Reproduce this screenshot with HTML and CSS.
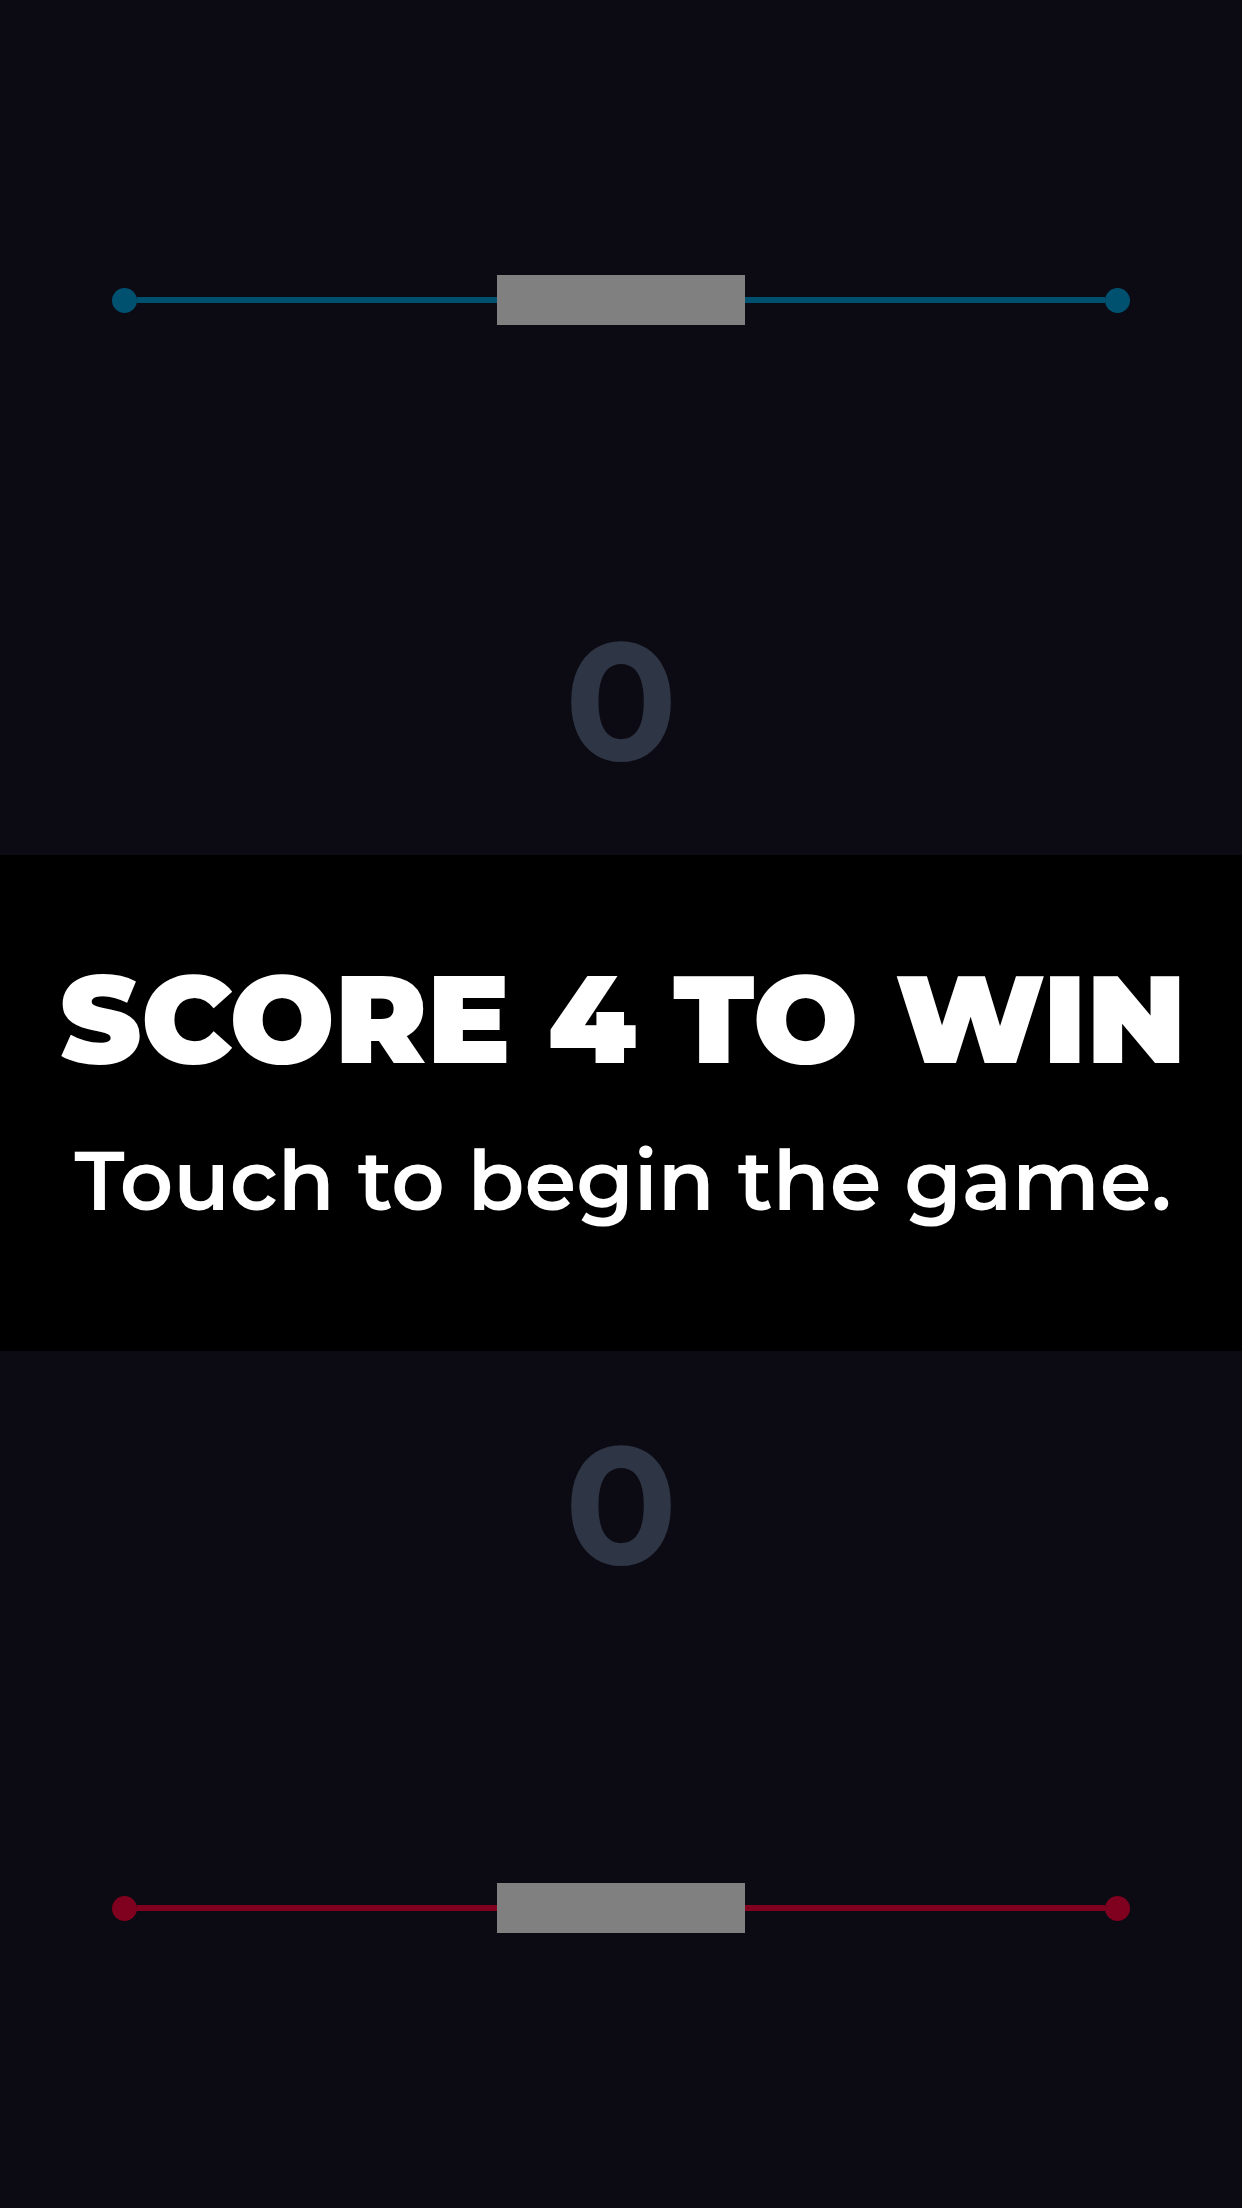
FILE: index.html
```html
<!DOCTYPE html>
<html lang="en">
<head>
<meta charset="utf-8">
<meta name="viewport" content="width=device-width, initial-scale=1">
<title>Score 4 to win</title>
<link rel="stylesheet" href="styles.css">
</head>
<body>
<main class="game">
  <section class="side side-top">
    <div class="track"><span class="dot"></span><span class="line"></span><span class="paddle"></span><span class="line"></span><span class="dot"></span></div>
    <output class="score">0</output>
  </section>
  <section class="banner">
    <h1 class="goal">SCORE 4 TO WIN</h1>
    <p class="hint">Touch to begin the game.</p>
  </section>
  <section class="side side-bottom">
    <output class="score">0</output>
    <div class="track"><span class="dot"></span><span class="line"></span><span class="paddle"></span><span class="line"></span><span class="dot"></span></div>
  </section>
</main>
</body>
</html>
```
FILE: styles.css
```css
* { box-sizing: border-box; margin: 0; }
body { background: #0c0b13; font-family: Montserrat, Inter, "Open Sans", sans-serif; }
.game { min-height: 100vh; display: flex; flex-direction: column; }
.side { flex: 1; display: flex; flex-direction: column; align-items: center; }
.side-top { color: #005070; padding-top: 275px; }
.side-bottom { color: #80001f; justify-content: flex-end; padding-bottom: 275px; }
.track { width: 82%; display: flex; align-items: center; }
.dot { width: 25px; height: 25px; border-radius: 50%; background: currentColor; }
.line { flex: 1; height: 6px; background: currentColor; }
.paddle { width: 248px; height: 50px; background: #808080; }
.score { color: #2e3545; font-size: 166px; line-height: 200px; font-weight: 700; }
.side-top .score { margin-top: 276px; }
.side-bottom .score { margin-bottom: 278px; }
.banner { background: #000; color: #fff; text-align: center; padding: 104px 16px 120px 20px; }
.goal { font-size: 124px; line-height: 120px; font-weight: 900; white-space: nowrap; }
.hint { font-size: 83px; line-height: 100px; font-weight: 600; margin-top: 52px; white-space: nowrap; }
```
